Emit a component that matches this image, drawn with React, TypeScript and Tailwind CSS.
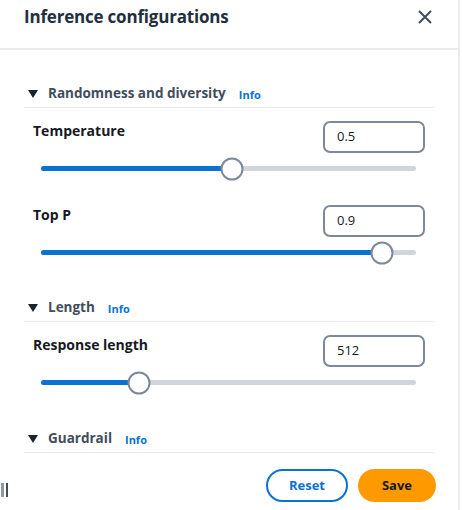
const SECTION_TEXT = 'text-[#414d5c]';

function SectionHeader({ title }: { title: string }) {
  return (
    <div className="mx-6 flex items-center border-b border-[#e9ebed] h-[28px]">
      <svg className="ml-[4px] w-[10px] h-[8px] text-[#1b232d]" viewBox="0 0 10 8" fill="currentColor">
        <path d="M0 0h10L5 8z" />
      </svg>
      <span className={`ml-[10px] text-[13.5px] font-bold ${SECTION_TEXT}`}>{title}</span>
      <span className="ml-[13px] mt-[3px] text-[11px] font-bold text-[#0972d3]">Info</span>
    </div>
  );
}

function SliderField({ label, value, pct }: { label: string; value: string; pct: number }) {
  return (
    <div className="pl-[33px] pr-[33px]">
      <div className="flex items-start justify-between">
        <span className="-mt-[1px] text-[14px] font-bold text-[#16191f]">{label}</span>
        <div className="w-[102px] h-[32px] rounded-[7px] border-2 border-[#7d8998] flex items-center pl-[12px] text-[13px] text-[#16191f]">
          {value}
        </div>
      </div>
      <div className="relative mt-[13px] ml-[8px] mr-[9px] h-[5px] rounded-full bg-[#d1d5db]">
        <div className="h-full rounded-full bg-[#0972d3]" style={{ width: `${pct}%` }} />
        <div
          className="absolute top-1/2 w-[23px] h-[23px] -translate-x-1/2 -translate-y-1/2 rounded-full bg-white border-2 border-[#7d8998]"
          style={{ left: `${pct}%` }}
        />
      </div>
    </div>
  );
}

export default function App() {
  return (
    <div
      className="w-[462px] h-[510px] bg-white flex overflow-hidden"
      style={{ fontFamily: '"Open Sans", "Noto Sans", sans-serif' }}
    >
      <div className="relative flex-1 flex flex-col">
        {/* Header */}
        <div className="h-[50px] flex items-start justify-between pl-[24px] pr-[26px] border-b-2 border-[#e9ebed]">
          <h1 className="mt-[4px] text-[17px] font-bold tracking-[-0.2px] text-[#232f3e]">Inference configurations</h1>
          <svg className="mt-[10px] w-[14px] h-[14px] text-[#414d5c]" viewBox="0 0 14 14" fill="none" stroke="currentColor" strokeWidth={2}>
            <path d="M1 1l12 12M13 1L1 13" />
          </svg>
        </div>

        <div className="pt-[30px]">
          <SectionHeader title="Randomness and diversity" />
          <div className="pt-[13px]">
            <SliderField label="Temperature" value="0.5" pct={51} />
          </div>
          <div className="pt-[34px]">
            <SliderField label="Top P" value="0.9" pct={91} />
          </div>
        </div>

        <div className="pt-[39px]">
          <SectionHeader title="Length" />
          <div className="pt-[13px]">
            <SliderField label="Response length" value="512" pct={26} />
          </div>
        </div>

        <div className="pt-[40px]">
          <SectionHeader title="Guardrail" />
        </div>

        {/* Footer */}
        <div className="flex justify-end gap-[10px] pr-[22px] pt-[16px]">
          <button className="w-[82px] h-[33px] rounded-full border-2 border-[#0972d3] text-[13px] font-bold text-[#0972d3]">
            Reset
          </button>
          <button className="w-[78px] h-[33px] rounded-full bg-[#ff9900] text-[13px] font-bold text-[#16191f]">
            Save
          </button>
        </div>

        {/* resize handle */}
        <div className="absolute left-[1px] top-[483px] flex gap-[2px]">
          <div className="w-[3px] h-[14px] bg-[#8d99a8]" />
          <div className="w-[2px] h-[14px] bg-[#414d5c]" />
        </div>
      </div>
      <div className="w-[2px] mr-[2px] bg-[#e9ebed]" />
    </div>
  );
}
